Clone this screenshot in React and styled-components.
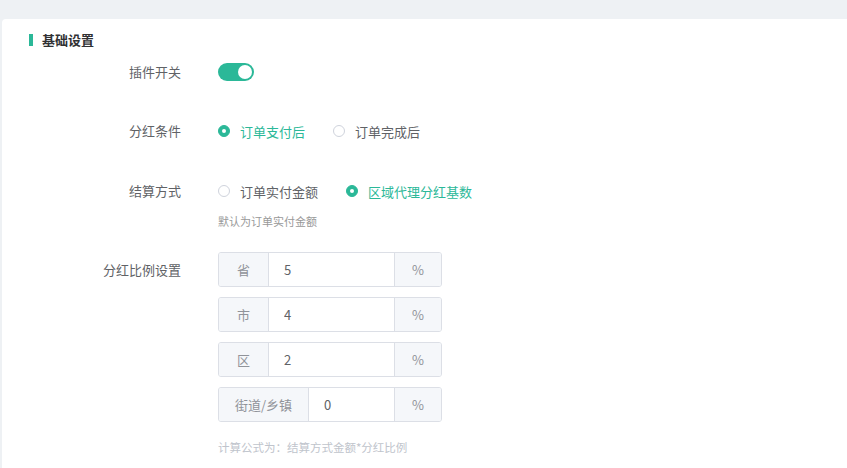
import React, { useState } from 'react';
import styled, { createGlobalStyle } from 'styled-components';

/* --- Styles --- */
const GlobalStyle = createGlobalStyle`
  html, body {
    margin: 0;
    padding: 0;
    background: #eef1f4;
    font-family: "Noto Sans CJK SC", "Noto Sans", "Liberation Sans", sans-serif;
  }
`;

const Page = styled.div`
  width: 847px;
  height: 468px;
  overflow: hidden;
  padding: 19px 0 0 2px;
  box-sizing: border-box;
`;

const Card = styled.div`
  background: #fff;
  border-radius: 4px 0 0 0;
  width: 900px;
  height: 460px;
  padding: 14px 0 0 27px;
  box-sizing: border-box;
`;

const SectionTitle = styled.div`
  display: flex;
  align-items: center;
  height: 14px;
  font-size: 13px;
  font-weight: 700;
  color: #303133;

  & span {
    position: relative;
    top: -1px;
  }

  &::before {
    content: '';
    width: 4px;
    height: 12px;
    background: #2bb898;
    margin-right: 9px;
  }
`;

const FormItem = styled.div`
  display: flex;
  align-items: flex-start;
  margin-top: ${props => props.gap}px;
`;

const Label = styled.div`
  width: 152px;
  flex-shrink: 0;
  text-align: right;
  font-size: 13px;
  line-height: ${props => props.lh || 36}px;
  color: #606266;
`;

const Control = styled.div`
  margin-left: 37px;
  display: flex;
  flex-direction: column;
`;

const SwitchTrack = styled.div`
  width: 36px;
  height: 18px;
  margin-top: 9px;
  border-radius: 9px;
  background: ${props => (props.on ? '#2bb898' : '#dcdfe6')};
  position: relative;
  cursor: pointer;

  &::after {
    content: '';
    position: absolute;
    top: 2px;
    left: ${props => (props.on ? '20px' : '2px')};
    width: 14px;
    height: 14px;
    border-radius: 50%;
    background: #fff;
    transition: left 0.2s;
  }
`;

const RadioGroup = styled.div`
  display: flex;
  align-items: center;
  height: 36px;
`;

const RadioItem = styled.label`
  display: inline-flex;
  align-items: center;
  margin-right: 28px;
  font-size: 13px;
  color: ${props => (props.checked ? '#2bb898' : '#606266')};
  cursor: pointer;
`;

const RadioDot = styled.span`
  width: 12px;
  height: 12px;
  box-sizing: border-box;
  border-radius: 50%;
  border: 1px solid ${props => (props.checked ? '#2bb898' : '#cfd3dc')};
  background: ${props => (props.checked ? '#2bb898' : '#fff')};
  margin-right: 10px;
  display: inline-flex;
  align-items: center;
  justify-content: center;

  &::after {
    content: '';
    width: 4px;
    height: 4px;
    border-radius: 50%;
    background: #fff;
    display: ${props => (props.checked ? 'block' : 'none')};
  }
`;

const Hint = styled.div`
  font-size: ${props => props.size || 11}px;
  line-height: 16px;
  margin-top: ${props => props.top}px;
  color: ${props => props.color || '#999'};
`;

const InputGroup = styled.div`
  display: flex;
  width: 224px;
  height: 35px;
  box-sizing: border-box;
  border: 1px solid #dcdfe6;
  border-radius: 3px;
  overflow: hidden;
  margin-bottom: 10px;
  font-size: 13px;

  &:last-of-type {
    margin-bottom: 0;
  }
`;

const Addon = styled.div`
  display: flex;
  align-items: center;
  justify-content: center;
  padding: 0 ${props => props.pad}px;
  background: #f5f7fa;
  color: #909399;
  ${props => (props.side === 'left' ? 'border-right' : 'border-left')}: 1px solid #dcdfe6;
  flex-shrink: 0;
`;

const Input = styled.input`
  flex: 1;
  min-width: 0;
  border: none;
  outline: none;
  padding: 0 15px;
  font-size: 13px;
  font-family: inherit;
  color: #606266;
  background: #fff;
`;

/* --- Data --- */
const ratios = [
  { name: '省', value: '5' },
  { name: '市', value: '4' },
  { name: '区', value: '2' },
  { name: '街道/乡镇', value: '0' }
];

const Radio = ({ checked, children, onClick }) => (
  <RadioItem checked={checked} onClick={onClick}>
    <RadioDot checked={checked} />
    {children}
  </RadioItem>
);

/* --- Component --- */
export default function App() {
  const [enabled, setEnabled] = useState(true);
  const [condition, setCondition] = useState(0);
  const [method, setMethod] = useState(1);

  return (
    <Page>
      <GlobalStyle />
      <Card>
        <SectionTitle>
          <span>基础设置</span>
        </SectionTitle>

        <FormItem gap={7}>
          <Label>插件开关</Label>
          <Control>
            <SwitchTrack on={enabled} onClick={() => setEnabled(!enabled)} />
          </Control>
        </FormItem>

        <FormItem gap={23}>
          <Label>分红条件</Label>
          <Control>
            <RadioGroup>
              <Radio checked={condition === 0} onClick={() => setCondition(0)}>订单支付后</Radio>
              <Radio checked={condition === 1} onClick={() => setCondition(1)}>订单完成后</Radio>
            </RadioGroup>
          </Control>
        </FormItem>

        <FormItem gap={24}>
          <Label>结算方式</Label>
          <Control>
            <RadioGroup>
              <Radio checked={method === 0} onClick={() => setMethod(0)}>订单实付金额</Radio>
              <Radio checked={method === 1} onClick={() => setMethod(1)}>区域代理分红基数</Radio>
            </RadioGroup>
            <Hint top={4}>默认为订单实付金额</Hint>
          </Control>
        </FormItem>

        <FormItem gap={23}>
          <Label lh={35}>分红比例设置</Label>
          <Control>
            {ratios.map(r => (
              <InputGroup key={r.name}>
                <Addon side="left" pad={r.name.length > 1 ? 16 : 18}>{r.name}</Addon>
                <Input defaultValue={r.value} />
                <Addon side="right" pad={17}>%</Addon>
              </InputGroup>
            ))}
            <Hint top={7} size={11.5} color="#c0c4cc">计算公式为：结算方式金额*分红比例</Hint>
          </Control>
        </FormItem>
      </Card>
    </Page>
  );
}
